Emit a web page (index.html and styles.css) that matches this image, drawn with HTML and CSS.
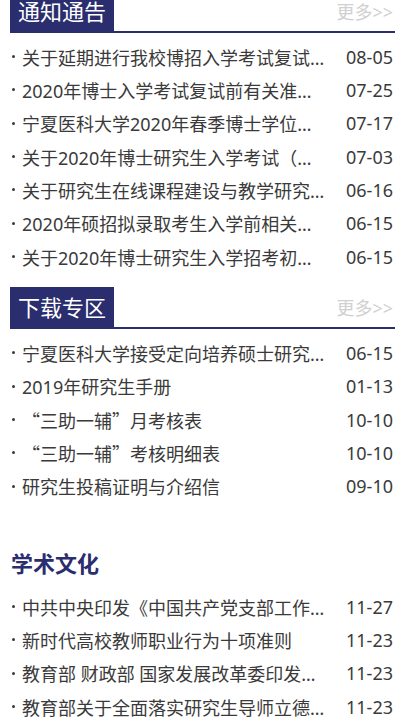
FILE: index.html
```html
<!DOCTYPE html>
<html lang="zh-CN">
<head>
    <meta charset="UTF-8">
    <meta name="viewport" content="width=device-width, initial-scale=1.0">
    <title>通知通告</title>
    <link rel="stylesheet" href="styles.css">
</head>
<body>
    <div class="page">
        <div class="section first">
            <div class="sec-head">
                <span class="sec-title">通知通告</span>
                <a class="more" href="#">更多&gt;&gt;</a>
            </div>
            <ul class="news">
                <li><span class="t">关于延期进行我校博招入学考试复试工作的通知</span><span class="d">08-05</span></li>
                <li><span class="t">2020年博士入学考试复试前有关准备工作的通知</span><span class="d">07-25</span></li>
                <li><span class="t">宁夏医科大学2020年春季博士学位授予名单公示</span><span class="d">07-17</span></li>
                <li><span class="t">关于2020年博士研究生入学考试（申请考核制）的通知</span><span class="d">07-03</span></li>
                <li><span class="t">关于研究生在线课程建设与教学研究项目立项的通知</span><span class="d">06-16</span></li>
                <li><span class="t">2020年硕招拟录取考生入学前相关事项的通知</span><span class="d">06-15</span></li>
                <li><span class="t">关于2020年博士研究生入学招考初试成绩的通知</span><span class="d">06-15</span></li>
            </ul>
        </div>

        <div class="section">
            <div class="sec-head">
                <span class="sec-title">下载专区</span>
                <a class="more" href="#">更多&gt;&gt;</a>
            </div>
            <ul class="news">
                <li><span class="t">宁夏医科大学接受定向培养硕士研究生协议书</span><span class="d">06-15</span></li>
                <li><span class="t">2019年研究生手册</span><span class="d">01-13</span></li>
                <li><span class="t cjk">“三助一辅”月考核表</span><span class="d">10-10</span></li>
                <li><span class="t cjk">“三助一辅”考核明细表</span><span class="d">10-10</span></li>
                <li><span class="t">研究生投稿证明与介绍信</span><span class="d">09-10</span></li>
            </ul>
        </div>

        <div class="section plain">
            <div class="sec-head">
                <span class="sec-title">学术文化</span>
            </div>
            <ul class="news">
                <li><span class="t">中共中央印发《中国共产党支部工作条例（试行）》</span><span class="d">11-27</span></li>
                <li><span class="t">新时代高校教师职业行为十项准则</span><span class="d">11-23</span></li>
                <li><span class="t">教育部 财政部 国家发展改革委印发《关于高等学校加快“双一流”建设的指导意见》</span><span class="d">11-23</span></li>
                <li><span class="t">教育部关于全面落实研究生导师立德树人职责的意见</span><span class="d">11-23</span></li>
            </ul>
        </div>
    </div>
</body>
</html>
```

FILE: styles.css
```css
body {
    margin: 0;
    background: #fff;
    font-family: "Noto Sans", "Noto Sans CJK SC", sans-serif;
    color: #3a3a3a;
}
.page {
    padding: 0 10px;
}
.section {
    margin-top: 14px;
}
.section.first {
    margin-top: -9px;
}
.sec-head {
    display: flex;
    justify-content: space-between;
    align-items: center;
    border-bottom: 2px solid #2a2d6e;
}
.sec-title {
    display: block;
    background: #2a2d6e;
    color: #fff;
    font-size: 22px;
    line-height: 40px;
    height: 40px;
    padding: 0 8px;
}
.more {
    color: #d0d0d0;
    font-size: 18px;
    text-decoration: none;
    padding-right: 2px;
}
.plain {
    margin-top: 40px;
}
.plain .sec-head {
    border-bottom: none;
}
.plain .sec-title {
    background: none;
    color: #2a2d6e;
    font-weight: bold;
    padding: 0 1px;
}
.news {
    list-style: none;
    margin: 0;
    padding: 7px 0 0;
}
.news li {
    display: flex;
    align-items: center;
    height: 33.33px;
    font-size: 18px;
    color: #3a3a3a;
}
.news li::before {
    content: "";
    flex: none;
    width: 3px;
    height: 3px;
    border-radius: 50%;
    background: #3a3a3a;
    margin: 0 7px 0 2px;
}
.news .t {
    flex: 1;
    min-width: 0;
    white-space: nowrap;
    overflow: hidden;
    text-overflow: ellipsis;
}
.news .t.cjk {
    font-family: "Noto Sans CJK SC", sans-serif;
}
.news .d {
    flex: none;
    margin-left: 18px;
    padding-right: 2px;
}
```
